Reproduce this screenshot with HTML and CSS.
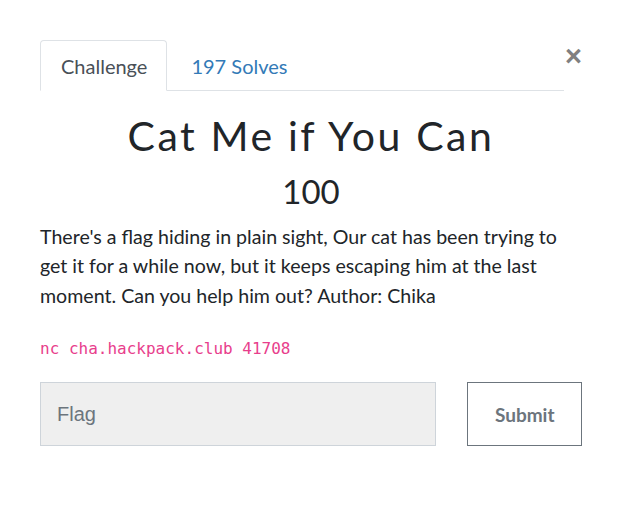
FILE: index.html
```html
<!DOCTYPE html>
<html>
<head>
<meta charset="utf-8">
<link rel="stylesheet" href="styles.css">
</head>
<body>
<div class="modal">
  <div class="header">
    <nav class="tabs">
      <span class="tab active">Challenge</span>
      <span class="tab link">197 Solves</span>
    </nav>
    <span class="close">&times;</span>
  </div>
  <h2 class="title">Cat Me if You Can</h2>
  <h3 class="value">100</h3>
  <p class="desc">There's a flag hiding in plain sight, Our cat has been trying to get it for a while now, but it keeps escaping him at the last moment. Can you help him out? Author: Chika</p>
  <code class="cmd">nc cha.hackpack.club 41708</code>
  <form class="submit-row">
    <input class="flag" type="text" placeholder="Flag">
    <button class="btn" type="button">Submit</button>
  </form>
</div>
</body>
</html>
```
FILE: styles.css
```css
* { box-sizing: border-box; }
body {
  margin: 0;
  background: #fff;
  font-family: Lato, "Noto Sans", sans-serif;
  color: #212529;
}
.modal {
  width: 622px;
  padding: 40px 40px 0 40px;
}
.header {
  display: flex;
  align-items: flex-start;
}
.tabs {
  display: flex;
  width: 524px;
  border-bottom: 1px solid #dee2e6;
}
.tab {
  font-size: 20px;
  height: 51px;
  line-height: 51px;
  padding: 0 19px 0 20px;
  margin-bottom: -1px;
  border: 1px solid transparent;
  border-radius: 4px 4px 0 0;
}
.tab.active {
  color: #495057;
  border-color: #dee2e6 #dee2e6 #fff;
  background: #fff;
}
.tab.link {
  color: #337ab7;
  padding-left: 23px;
}
.close {
  margin-left: auto;
  font-family: "Liberation Sans", Arial, sans-serif;
  font-size: 29px;
  font-weight: bold;
  line-height: 1;
  color: #808080;
  margin-top: 2px;
  margin-right: 0;
}
.title {
  margin: 20px 0 0;
  text-align: center;
  font-weight: 400;
  font-size: 41px;
  letter-spacing: 2.6px;
  line-height: 1.2;
}
.value {
  margin: 12px 0 0;
  text-align: center;
  font-weight: 400;
  font-size: 33px;
  line-height: 1.2;
}
.desc {
  margin: 10px 0 0;
  font-size: 19.6px;
  line-height: 29.5px;
  color: #212529;
}
.cmd {
  display: block;
  margin-top: 29px;
  font-family: "DejaVu Sans Mono", monospace;
  font-size: 16px;
  color: #e83e8c;
}
.submit-row {
  display: flex;
  margin-top: 24px;
  gap: 30px;
}
.flag {
  width: 398px;
  height: 64px;
  background: #efefef;
  border: 1px solid #ced4da;
  padding: 0 16px;
  font-family: "Liberation Sans", Arial, sans-serif;
  font-size: 20px;
  color: #495057;
  border-radius: 0;
}
.flag::placeholder { color: #6c757d; }
.btn {
  width: 115px;
  height: 64px;
  margin-left: 1px;
  background: #fff;
  border: 1px solid #6c757d;
  border-radius: 0;
  font-family: Lato, sans-serif;
  font-weight: bold;
  font-size: 19px;
  color: #6c757d;
}
```
